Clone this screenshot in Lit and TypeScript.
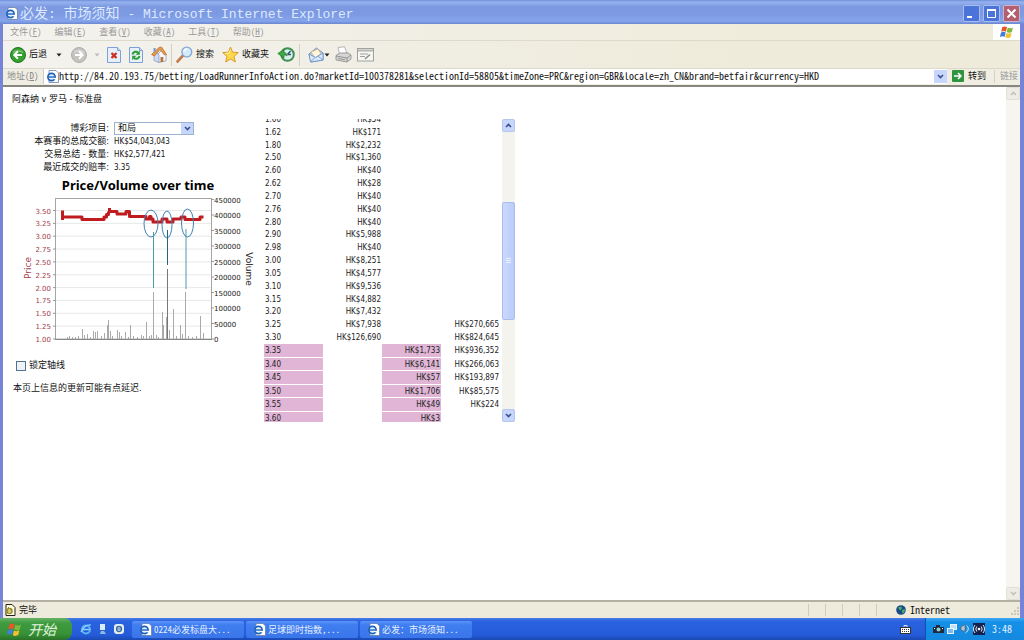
import { LitElement, html, svg, css, nothing } from "lit";
import { customElement } from "lit/decorators.js";

type Row = [price: string, back: string, lay: string, matched: string];

const UPPER: Row[] = [
  ["1.60", "HK$54", "", ""],
  ["1.62", "HK$171", "", ""],
  ["1.80", "HK$2,232", "", ""],
  ["2.50", "HK$1,360", "", ""],
  ["2.60", "HK$40", "", ""],
  ["2.62", "HK$28", "", ""],
  ["2.70", "HK$40", "", ""],
  ["2.76", "HK$40", "", ""],
  ["2.80", "HK$40", "", ""],
  ["2.90", "HK$5,988", "", ""],
  ["2.98", "HK$40", "", ""],
  ["3.00", "HK$8,251", "", ""],
  ["3.05", "HK$4,577", "", ""],
  ["3.10", "HK$9,536", "", ""],
  ["3.15", "HK$4,882", "", ""],
  ["3.20", "HK$7,432", "", ""],
  ["3.25", "HK$7,938", "", "HK$270,665"],
  ["3.30", "HK$126,690", "", "HK$824,645"],
];

const LOWER: Row[] = [
  ["3.35", "", "HK$1,733", "HK$936,352"],
  ["3.40", "", "HK$6,141", "HK$266,063"],
  ["3.45", "", "HK$57", "HK$193,897"],
  ["3.50", "", "HK$1,706", "HK$85,575"],
  ["3.55", "", "HK$49", "HK$224"],
  ["3.60", "", "HK$3", ""],
];

const ieIcon = html`<svg width="13" height="13" viewBox="0 0 13 13" aria-hidden="true">
  <path d="M3 .5h7l2.500 2.500v9.500h-9.500z" fill="#fff" stroke="#6b7fa8" stroke-width=".8" />
  <circle cx="5.500" cy="7" r="3.600" fill="#e8f2ff" stroke="#1c62b8" stroke-width="1.700" />
  <path d="M2.500 7h6" stroke="#1c62b8" stroke-width="1.400" />
  <path d="M7.500 8.600h2.500" stroke="#fff" stroke-width="1.400" />
</svg>`;

const chevron = (up = false, color = "#3b4f86") => html`<svg width="7" height="5" viewBox="0 0 7 5" aria-hidden="true">
  <path d=${up ? "M1 4 3.500 1.500 6 4" : "M1 1 3.500 3.500 6 1"} fill="none" stroke=${color} stroke-width="1.600" />
</svg>`;

const caret = (color: string) => html`<svg width="6" height="4" viewBox="0 0 6 4" aria-hidden="true">
  <path d="M.5.500h5L3 3.500z" fill=${color} />
</svg>`;

const flag = (s: number) => html`<svg width=${s} height=${s} viewBox="0 0 14 14" aria-hidden="true">
  <path d="M2.200 2.300C4 1.100 5.600 1.200 7 2.200L5.900 6.700C4.500 5.700 2.900 5.700 1.200 6.700z" fill="#e8562a" />
  <path d="M7.800 2.500C9.300 3.500 11 3.500 13 2.400L11.800 6.900C10.100 8 8.300 7.900 6.700 7z" fill="#7cbb3c" />
  <path d="M1 7.500C2.700 6.500 4.300 6.600 5.700 7.600L4.600 12C3.200 11 1.600 11-.1 12z" fill="#3f7fd8" />
  <path d="M6.500 7.900C8.100 8.800 9.700 8.800 11.600 7.800L10.500 12.200C8.700 13.200 7 13.200 5.400 12.300z" fill="#f5c02c" />
</svg>`;

const round = (a: string, b: string, flip: boolean) => html`<svg width="16" height="16" viewBox="0 0 16 16" aria-hidden="true">
  <circle cx="8" cy="8" r="7.500" fill=${a} stroke=${b} />
  <path d="M3 5.500a6 4 0 0 1 10 0" fill="none" stroke="#fff" stroke-opacity=".35" stroke-width="1.500" />
  <path d=${flip ? "M4 8h7.500M8 4.300 11.700 8 8 11.700" : "M12 8H4.500M8 4.300 4.300 8 8 11.700"} fill="none" stroke="#fff" stroke-width="2" />
</svg>`;

@customElement("price-chart")
class PriceChart extends LitElement {
  static styles = css`
    :host { display: block; }
    svg { display: block; overflow: visible; }
    .axis { font-family: "DejaVu Sans", sans-serif; font-size: 7px; }
    .name { font-family: "DejaVu Sans", sans-serif; font-size: 9px; }
    .title { font-family: "Noto Sans", "Open Sans", sans-serif; font-size: 13px; font-weight: 700; }
  `;

  private bars: [number, number][] = [
    [67, 337], [69, 336], [72, 337], [75, 337], [78, 336], [82, 329], [84, 335], [87, 334], [90, 337],
    [93, 331], [95, 332], [97, 331], [101, 336], [104, 333], [107, 325], [108, 320], [110, 331], [112, 336],
    [117, 330], [119, 332], [121, 336], [125, 332], [128, 337], [130, 325], [133, 336], [137, 337], [141, 335],
    [143, 336], [146, 322], [149, 336], [151, 335], [153, 292], [156, 335], [158, 337], [162, 312], [163, 325],
    [166, 317], [167, 269], [169, 330], [173, 309], [176, 336], [180, 325], [182, 334], [185, 292], [188, 336],
    [192, 337], [196, 336], [200, 316], [203, 333],
  ];

  render() {
    const left = Array.from({ length: 11 }, (_, i) => i);
    const right = Array.from({ length: 10 }, (_, i) => i);
    return html`<svg width="236" height="170" viewBox="20 174 236 170" role="img" aria-label="Price/Volume over time">
      <text class="title" x="138" y="190" text-anchor="middle">Price/Volume over time</text>
      <rect x="55.500" y="198.500" width="156" height="140.500" fill="#fff" stroke="#a5a5a5" />
      ${left.map((i) => {
        const y = 339 - i * 12.850;
        return svg`<path d="M56 ${y}H211" stroke="#dfe3e4" stroke-width=".8"/><path d="M53 ${y}h3" stroke="#999"/>
          <text class="axis" x="51" y=${y + 3} text-anchor="end" fill="#a2404a">${(1 + i * 0.25).toFixed(2)}</text>`;
      })}
      ${right.map((i) => {
        const y = 339 - i * 15.500;
        return svg`<path d="M211 ${y}h3" stroke="#999"/><text class="axis" x="214" y=${y + 3} fill="#222">${i * 50000}</text>`;
      })}
      <text class="name" transform="translate(31 268) rotate(-90)" text-anchor="middle" fill="#a2404a">Price</text>
      <text class="name" transform="translate(246 269) rotate(90)" text-anchor="middle" fill="#222">Volume</text>
      ${this.bars.map(([x, y]) => svg`<path d="M${x + 0.5} 339V${y}" stroke=${y < 270 ? "#777" : "#aaa"}/>`)}
      <path d="M55 339.500H212" stroke="#888" />
      <path d="M62.500 210.500V220M63 217H82V219.500H104V217H106.500V214.500H108.500V211.500M109.500 208V213M109 211.500H117V214H126V211.500H129.500V216.500H146V219H149.500V216.500H151V219H153V222H162V219H167V222H173V219H181V217H185V219.500H200V217H203.500"
        fill="none" stroke="#c01c1f" stroke-width="3" stroke-linejoin="round" />
      <g fill="none" stroke="#3f83b5">
        <ellipse cx="151" cy="223.500" rx="7" ry="13.500" />
        <ellipse cx="167" cy="224.500" rx="5" ry="13.500" />
        <ellipse cx="187.500" cy="223" rx="6" ry="14" />
        <path d="M153.500 232V288M186 229V289" stroke="#4d9aa8" />
        <path d="M167.500 230V265" stroke="#26617e" />
      </g>
    </svg>`;
  }
}

@customElement("price-ladder")
class PriceLadder extends LitElement {
  static styles = css`
    :host { display: flex; gap: 2px; height: 303px; }
    .view { width: 236px; overflow: hidden; }
    table { display: block; margin-top: -6px; font: 8px/10px "DejaVu Sans Condensed", "DejaVu Sans", sans-serif; color: #222; }
    tbody { display: grid; grid-auto-rows: 1fr; }
    .upper { height: 231px; }
    .lower { height: 80px; row-gap: 1px; }
    tr { display: grid; grid-template-columns: repeat(4, 1fr); align-items: stretch; }
    td { padding: 2px 1px 0; text-align: right; white-space: nowrap; }
    td:first-child { text-align: left; }
    .hot { background: #e0b5d6; }
    .bar { width: 13px; display: flex; flex-direction: column; background: #f4f3ee; }
    button { padding: 0; border: 1px solid #b4c6ee; border-radius: 2px; background: #c6d6fc; height: 13px; display: grid; place-items: center; }
    .space { flex: 71; }
    .rest { flex: 90; }
    .thumb { flex: 116; display: grid; place-items: center; border: 1px solid #a9bdf0; border-radius: 2px; background: linear-gradient(90deg, #cbd9fd, #b9cbf8); }
  `;

  private row([p, b, l, m]: Row, hot: boolean) {
    const c = hot ? "hot" : nothing;
    return html`<tr><td class=${c}>${p}</td><td>${b}</td><td class=${c}>${l}</td><td>${m}</td></tr>`;
  }

  render() {
    return html`
      <div class="view">
        <table>
          <tbody class="upper">${UPPER.map((r) => this.row(r, false))}</tbody>
          <tbody class="lower">${LOWER.map((r) => this.row(r, true))}</tbody>
        </table>
      </div>
      <div class="bar">
        <button aria-label="Scroll up">${chevron(true)}</button>
        <div class="space"></div>
        <div class="thumb"><svg width="5" height="6" viewBox="0 0 5 6"><path d="M0 .5h5M0 2.500h5M0 4.500h5" stroke="#eaf1ff" /></svg></div>
        <div class="rest"></div>
        <button aria-label="Scroll down">${chevron()}</button>
      </div>`;
  }
}

@customElement("app-root")
class AppRoot extends LitElement {
  static styles = css`
    :host {
      display: flex; flex-direction: column; min-height: 100vh; background: #fff; color: #111;
      --mono: "Noto Sans Mono CJK SC", "Noto Sans CJK SC", monospace;
      font: 9px/13px "DejaVu Sans Condensed", "Noto Sans CJK SC", sans-serif;
    }
    * { box-sizing: border-box; }
    svg { display: block; flex: none; }
    button { font: inherit; color: inherit; border: 0; padding: 0; background: none; display: flex; align-items: center; white-space: nowrap; }
    .window { flex: 1; display: flex; flex-direction: column; border: solid #7584d6; border-width: 0 4px 0 3px; }
    .titlebar {
      display: flex; align-items: center; height: 24px; margin: 0 -4px 0 -3px; padding: 3px 4px 0 5px; gap: 2px; color: #dce9ff;
      background: linear-gradient(#6f8fd6, #96b2f0 2px, #7b98e0 7px, #7c99e2 14px, #86a5ec 21px, #6a86cf);
    }
    .titlebar h1 { margin: 0; flex: 1; font: 13px/16px "Liberation Mono", monospace; white-space: pre; }
    .cjk { font: 14px/16px "Noto Sans CJK SC", sans-serif; }
    .winbtns { display: flex; gap: 3px; }
    .winbtns button { width: 17px; height: 17px; border: 1px solid #a9bdf2; border-radius: 2px; background: #4a74d8; justify-content: center; }
    .winbtns .close { background: #b2606f; border-color: #d3b3cc; }
    .menubar { display: flex; height: 17px; background: linear-gradient(90deg, #f3f2ee, #efecdc 75%); border-bottom: 1px solid #dddacb; }
    .menus { flex: 1; display: flex; align-items: center; gap: 13px; padding-left: 7px; font: 9px/14px var(--mono); color: #999; }
    u { text-underline-offset: 1px; }
    .brand { width: 27px; background: #fff; display: grid; place-items: center; }
    .tools { display: flex; align-items: center; gap: 8px; height: 28px; padding-left: 7px; background: linear-gradient(90deg, #f3f2ee, #eeebda 75%); border-bottom: 1px solid #dcd9ca; }
    .tools button { gap: 3px; }
    .tools .wide { width: 8px; justify-content: center; }
    .tools .slim { width: 4px; justify-content: center; }
    .tools .mail { gap: 0; }
    .group { display: flex; align-items: center; gap: 5px; padding-left: 2px; }
    .sep { width: 1px; height: 22px; margin: 0 -4px; background: #d3d0c2; }
    .address { display: flex; align-items: center; height: 18px; padding: 0 2px 2px 4px; background: #f0eee3; border-bottom: 2px solid #87877f; }
    .address label { width: 36px; font: 9px/14px var(--mono); color: #888; }
    .urlbox { flex: 1; display: flex; align-items: center; height: 15px; padding-left: 2px; background: #fff; border-left: 1px solid #ccc; }
    .urlbox input { flex: 1; min-width: 0; border: 0; padding: 0; outline: 0; font: 10px/14px var(--mono); color: #111; background: none; height: 14px; }
    .urlbox button { width: 13px; height: 13px; justify-content: center; background: #c6d6fc; }
    .address .go { padding-left: 5px; gap: 4px; }
    .links { margin-left: 8px; padding-left: 5px; border-left: 1px solid #d5d2c4; color: #999; }
    .body { flex: 1; display: flex; }
    .page { flex: 1; padding: 6px 8px 0 9px; }
    .page h2 { margin: 0 0 13px; font: inherit; }
    .cols { display: flex; }
    .info { flex: none; width: 252px; padding-top: 2px; }
    .facts { display: grid; grid-template-columns: 97px 1fr; column-gap: 5px; grid-template-rows: 14px; grid-auto-rows: 13px; align-items: center; margin: 0; }
    .facts label, .facts dt { text-align: right; }
    .facts dd, .facts dt { margin: 0; }
    .facts dd { font-size: 8px; }
    .pick { display: grid; width: 80px; height: 13px; }
    .pick > * { grid-area: 1 / 1; }
    .pick select { appearance: none; font: inherit; font-size: 9px; line-height: 11px; padding: 0 3px; border: 1px solid #9db2cf; border-radius: 0; background: #fff; color: #111; }
    .pick span { justify-self: end; align-self: center; margin-right: 1px; width: 12px; height: 11px; background: #c6d6fc; display: grid; place-items: center; pointer-events: none; }
    price-chart { margin-left: 8px; }
    .lock { display: flex; align-items: center; gap: 3px; padding-left: 4px; margin-top: 15px; }
    .lock input { appearance: none; width: 10px; height: 10px; margin: 0; border: 1px solid #4f7396; background: #eef2f4; }
    .note { margin: 10px 0 0 1px; }
    .vbar { width: 14px; background: #f6f5f0; display: flex; flex-direction: column; justify-content: space-between; }
    .vbar button { height: 13px; justify-content: center; background: #eeede5; border: 1px solid #e2e0d6; border-radius: 2px; }
    .status { display: flex; align-items: center; height: 18px; padding-left: 2px; gap: 3px; background: #eeebdc; border-top: 2px solid #b3b1a3; }
    .cells { flex: 1; display: flex; justify-content: flex-end; }
    .cells i { width: 17px; height: 12px; border-left: 1px solid #cfccbd; }
    .zone { display: flex; align-items: center; gap: 4px; width: 124px; font: 10px/14px var(--mono); }
    .zone span { flex: 1; }
    .taskbar { display: flex; align-items: stretch; height: 22px; color: #e6f0ff; background: linear-gradient(#4a7ee8, #2a63e0 3px, #245bd8 17px, #1b49b4); font: 9px/14px var(--mono); }
    .start { width: 72px; padding-left: 7px; gap: 6px; border-radius: 0 8px 8px 0; background: linear-gradient(#68b268, #3f9b40 5px, #379137 16px, #2a7229); color: #e4f5df; font: italic 14px/18px "Noto Sans CJK SC", sans-serif; }
    .quick { display: flex; align-items: center; gap: 5px; padding: 0 8px; width: 60px; }
    .tasks { flex: 1; display: flex; gap: 2px; padding: 3px 0 2px; }
    .tasks button { width: 112px; padding-left: 7px; gap: 2px; border-radius: 2px; background: linear-gradient(#5c94f8, #3f7df0 4px, #3a76ea); }
    .lang { align-self: center; margin-right: 14px; }
    .tray { display: flex; align-items: center; gap: 3px; padding: 0 12px 0 7px; border-left: 1px solid #0f4fb4; background: linear-gradient(#3fa8f4, #1690e8 4px, #1389df); font-size: 10px; }
    .tray time { margin-left: 4px; }
  `;

  private menus = [["文件", "F"], ["编辑", "E"], ["查看", "V"], ["收藏", "A"], ["工具", "T"], ["帮助", "H"]];
  private tasks = ["0224必发标盘大...", "足球即时指数,...", "必发：市场须知..."];

  render() {
    return html`
      <div class="window">
        <header class="titlebar">
          ${ieIcon}
          <h1><span class="cjk">必发</span>: <span class="cjk">市场须知</span> - Microsoft Internet Explorer</h1>
          <div class="winbtns">
            <button aria-label="Minimize"><svg width="11" height="11"><path d="M1 9h5" stroke="#fff" stroke-width="2" /></svg></button>
            <button aria-label="Maximize"><svg width="11" height="11"><path d="M1.500 2v7.500h8V2z" fill="none" stroke="#fff" /><path d="M1 2h9" stroke="#fff" stroke-width="2" /></svg></button>
            <button class="close" aria-label="Close"><svg width="11" height="11"><path d="M1.500 1.500l8 8M9.500 1.500l-8 8" stroke="#fff" stroke-width="2" /></svg></button>
          </div>
        </header>

        <nav class="menubar">
          <div class="menus">${this.menus.map(([t, k]) => html`<button>${t}(<u>${k}</u>)</button>`)}</div>
          <div class="brand">${flag(14)}</div>
        </nav>

        <div class="tools">
          <button>${round("#35a02f", "#22751f", false)}后退</button>
          <button class="wide" aria-label="Back history">${caret("#222")}</button>
          <button aria-label="Forward">${round("#c3c3c0", "#adadaa", true)}</button>
          <button class="slim" aria-label="Forward history">${caret("#bbb")}</button>
          <button aria-label="Stop"><svg width="14" height="16" viewBox="0 0 14 16">
            <path d="M.5.500h10l3 3v12H.5z" fill="#e6effc" stroke="#7fa0d4" /><path d="M10.500.500v3h3" fill="#cfdff5" stroke="#7fa0d4" />
            <path d="M4.500 6l5 5M9.500 6l-5 5" stroke="#cf2a1c" stroke-width="2.200" /></svg></button>
          <button aria-label="Refresh"><svg width="14" height="16" viewBox="0 0 14 16">
            <path d="M.5.500h10l3 3v12H.5z" fill="#e6f2f6" stroke="#7fa0d4" /><path d="M10.500.500v3h3" fill="#cfdff5" stroke="#7fa0d4" />
            <path d="M3.500 7.500C4 4.500 7.500 4 9 5.500M10.500 9C10 12 6.500 12.500 5 11" fill="none" stroke="#2c9a35" stroke-width="2" />
            <path d="M10.800 3.500v4.300H6.600zM3.200 13.200V8.800h4.200z" fill="#2c9a35" /></svg></button>
          <button aria-label="Home"><svg width="16" height="17" viewBox="0 0 16 17">
            <path d="M6 9l5-5 4 4.500V15l-8 1.500z" fill="#f3f6fb" stroke="#8a9fc4" stroke-width=".8" />
            <path d="M3 9v5.500l5 2V9L5.500 6z" fill="#cddcf2" stroke="#8a9fc4" stroke-width=".8" />
            <path d="M.5 8.500 8 1.500l2.500-.5 5 7.500-2 .5-4.500-5.500L3.500 10z" fill="#e79a4a" stroke="#b5672a" stroke-width=".7" />
            <path d="M2.500 2h2.200v3l-2.200 2z" fill="#7d9ad0" /><path d="M9.500 11h2.800v4.700l-2.800.500z" fill="#b5763c" /></svg></button>
          <span class="sep"></span>
          <button><svg width="17" height="17" viewBox="0 0 17 17">
            <path d="M1.500 15.500 7 9.500" stroke="#c27b4b" stroke-width="2.600" stroke-linecap="round" />
            <circle cx="10.800" cy="6" r="4.900" fill="#d5eafc" stroke="#86a9d4" stroke-width="1.400" />
            <path d="M8 5.500a3 3 0 0 1 3-2.500" fill="none" stroke="#fff" stroke-width="1.500" /></svg>搜索</button>
          <button><svg width="17" height="17" viewBox="0 0 17 17">
            <path d="M8.500 1l2.100 5.200 5.700.4-4.300 3.800 1.300 5.600-4.800-3-4.800 3L5 10.400.7 6.600l5.700-.4z" fill="#fbd94b" stroke="#dd9a2c" stroke-linejoin="round" />
            <path d="M8.500 3.500 7 7l-3.500.5" fill="none" stroke="#fff3b5" /></svg>收藏夹</button>
          <button aria-label="History"><svg width="18" height="17" viewBox="0 0 18 17">
            <circle cx="10.500" cy="8.500" r="6.300" fill="#d8efee" stroke="#3d9150" stroke-width="2" />
            <path d="M10.500 8.500 13.500 5M10.500 8.500h3.500" stroke="#32566e" stroke-width="1.400" />
            <path d="M.8 7.500 7 3.500v3c2 0 3 1.500 3 3.500-1.500-1.200-2-1-3-1v3z" fill="#3ca944" stroke="#227a2d" stroke-width=".7" /></svg></button>
          <span class="sep"></span>
          <div class="group">
            <button aria-label="Mail" class="mail"><svg width="18" height="17" viewBox="0 0 18 17">
              <path d="M3 8l7.500-6L17 7v7l-12 2z" fill="#b8d3f4" stroke="#6f94c8" />
              <path d="M5 6l7-3 3 5-6 4z" fill="#fff7e0" stroke="#d3a868" stroke-width=".7" />
              <path d="M3 8l6.500 3.500L17 7v7L4.500 16z" fill="#d9e9fb" stroke="#6f94c8" stroke-width=".9" />
              <path d="M4.500 15.500l4.500-4M17 14l-5-3.800" stroke="#6f94c8" stroke-width=".8" /></svg>${caret("#222")}</button>
            <button aria-label="Print"><svg width="17" height="17" viewBox="0 0 17 17">
              <path d="M4.500 8 3 1.500 9.500.800 12 7z" fill="#fff" stroke="#a5a5a5" stroke-width=".8" />
              <path d="M1 9.500 5 7h8l3 2v4l-4 3-11-2z" fill="#d6d6d4" stroke="#8c8c8c" stroke-width=".8" />
              <path d="M1 10l11 2 4-3M12 12v4M3 12.500l7 1.300" fill="none" stroke="#8c8c8c" stroke-width=".9" /></svg></button>
            <button aria-label="Edit"><svg width="17" height="14" viewBox="0 0 17 14">
              <rect x=".5" y=".5" width="16" height="12.500" fill="#f5f5f2" stroke="#a0a09c" /><path d="M1 2.500h15" stroke="#b4b4b0" stroke-width="2" />
              <path d="M3 6h8M3 8.500h5" stroke="#a0a09c" /><path d="M8 11l5-4.500" stroke="#8b8b88" stroke-width="1.500" /></svg></button>
          </div>
        </div>

        <div class="address">
          <label for="url">地址(<u>D</u>)</label>
          <div class="urlbox">
            ${ieIcon}
            <input id="url" spellcheck="false" value="http://84.20.193.75/betting/LoadRunnerInfoAction.do?marketId=100378281&selectionId=58805&timeZone=PRC&region=GBR&locale=zh_CN&brand=betfair&currency=HKD" />
            <button aria-label="Address list">${chevron()}</button>
          </div>
          <button class="go"><svg width="12" height="12" viewBox="0 0 12 12"><rect width="12" height="12" rx="1" fill="#2f9440" />
            <path d="M2 6h7M6 3l3 3-3 3" fill="none" stroke="#fff" stroke-width="1.500" /></svg>转到</button>
          <span class="links">链接</span>
        </div>

        <div class="body">
          <main class="page">
            <h2>阿森纳 v 罗马 - 标准盘</h2>
            <div class="cols">
              <section class="info">
                <dl class="facts">
                  <dt><label for="runner">博彩项目:</label></dt>
                  <dd class="pick"><select id="runner"><option>和局</option></select><span>${chevron()}</span></dd>
                  <dt>本赛事的总成交额:</dt><dd>HK$54,043,043</dd>
                  <dt>交易总结 - 数量:</dt><dd>HK$2,577,421</dd>
                  <dt>最近成交的赔率:</dt><dd>3.35</dd>
                </dl>
                <price-chart></price-chart>
                <label class="lock"><input type="checkbox" />锁定轴线</label>
                <p class="note">本页上信息的更新可能有点延迟.</p>
              </section>
              <price-ladder></price-ladder>
            </div>
          </main>
          <div class="vbar">
            <button aria-label="Page up">${chevron(true, "#c3c1b6")}</button>
            <button aria-label="Page down">${chevron(false, "#c3c1b6")}</button>
          </div>
        </div>

        <footer class="status">
          <svg width="11" height="12" viewBox="0 0 11 12"><path d="M1 .5h6l3 3v8H1z" fill="#fffbe0" stroke="#222" /><circle cx="4.500" cy="7" r="2.500" fill="none" stroke="#9a8f1c" stroke-width="1.500" /><path d="M2.500 7h4M3 3l3 3" stroke="#9a8f1c" /></svg>
          完毕
          <div class="cells"><i></i><i></i><i></i><i></i><i></i></div>
          <div class="zone">
            <svg width="10" height="10" viewBox="0 0 10 10"><circle cx="5" cy="5" r="4.800" fill="#174a86" /><path d="M2 2.500 5 1.500l1 2-2 2zM6 5l3-1-.500 3L6.500 9z" fill="#4fb06a" /></svg>
            <span>Internet</span>
            <svg width="9" height="9" viewBox="0 0 9 9"><path d="M6 1h2v2H6zM6 4h2v2H6zM3 4h2v2H3zM6 7h2v2H6zM3 7h2v2H3zM0 7h2v2H0z" fill="#cbc8b8" /></svg>
          </div>
        </footer>
      </div>

      <footer class="taskbar">
        <button class="start">${flag(15)}开始</button>
        <div class="quick">
          <svg width="12" height="12" viewBox="0 0 12 12"><circle cx="6" cy="6.500" r="4" fill="none" stroke="#5cb4f5" stroke-width="2" /><path d="M3 6.500h6.500M1 9C3 4 8 1 11 2" fill="none" stroke="#8fd0fb" stroke-width="1.300" /></svg>
          <svg width="11" height="12" viewBox="0 0 11 12"><path d="M3 1h5v6H3z" fill="#d9ebfb" /><path d="M4 8h3l2 3H3z" fill="#8fb9e0" /></svg>
          <svg width="12" height="12" viewBox="0 0 12 12"><rect x="1" y="1" width="10" height="10" rx="3" fill="#e6eef5" /><circle cx="6" cy="6" r="2.500" fill="none" stroke="#386a9c" stroke-width="1.300" /><path d="M4 6h4" stroke="#386a9c" /></svg>
        </div>
        <div class="tasks">${this.tasks.map((t) => html`<button>${ieIcon}${t}</button>`)}</div>
        <svg class="lang" width="11" height="9" viewBox="0 0 11 9"><path d="M4 2V.500h3V2" fill="none" stroke="#dfe8f8" /><rect x=".5" y="2.500" width="10" height="6" fill="#fff" stroke="#333" /><path d="M2 4.500h7M2 6.500h7" stroke="#333" stroke-dasharray="1 1" /></svg>
        <div class="tray">
          <svg width="11" height="10" viewBox="0 0 11 10"><path d="M0 3h3V1h4v2h4v6H0z" fill="#1d2b3c" /><circle cx="5.500" cy="5.500" r="2" fill="#9cc" /><path d="M9 4.500h1M1 4.500h1" stroke="#fff" /></svg>
          <svg width="10" height="11" viewBox="0 0 10 11"><rect x="3.500" y=".5" width="6" height="5" fill="#bfe0fa" stroke="#e9f5ff" /><rect x=".5" y="4.500" width="6" height="5" fill="#7db8ee" stroke="#e9f5ff" /></svg>
          <svg width="10" height="10" viewBox="0 0 10 10"><path d="M1 3l4-2.500v7L1 6z" fill="#b8c4ce" stroke="#55636f" stroke-width=".7" /><path d="M6.500 1.500c2.500 2 2.500 5-1 7.500" fill="none" stroke="#dfeaf2" /></svg>
          <svg width="12" height="12" viewBox="0 0 12 12"><rect width="12" height="12" fill="#16204e" /><circle cx="6" cy="6" r="1.300" fill="#fff" /><path d="M3.800 3.500a4 4 0 0 0 0 5M8.200 3.500a4 4 0 0 1 0 5M2 2a6 6 0 0 0 0 8M10 2a6 6 0 0 1 0 8" fill="none" stroke="#fff" stroke-width=".9" /></svg>
          <time>3:48</time>
        </div>
      </footer>`;
  }
}
